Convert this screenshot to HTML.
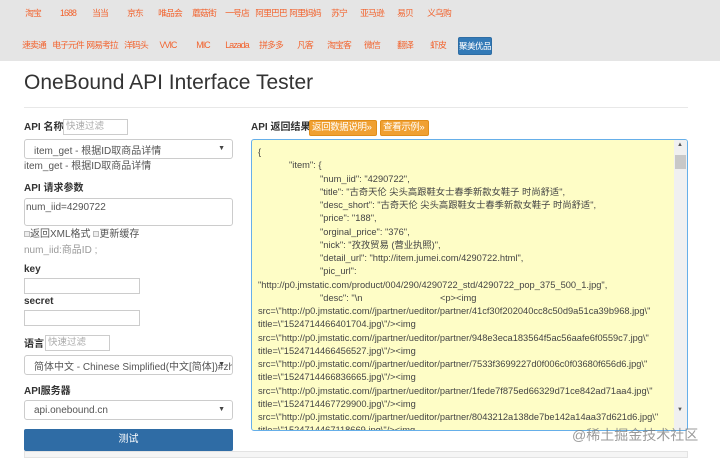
<!DOCTYPE html>
<html><head><meta charset="utf-8"><style>
*{margin:0;padding:0;box-sizing:border-box}
body{width:720px;height:458px;overflow:hidden;background:#fff;font-family:"Liberation Sans","Noto Sans CJK SC",sans-serif;position:relative;color:#333}
.nav{position:absolute;left:0;top:0;width:720px;height:61px;background:#e5e5e5}
.n{position:absolute;font-size:8.8px;line-height:12px;color:#f2642f;transform:translateX(-50%);white-space:nowrap;letter-spacing:-0.9px}
.btnj{position:absolute;left:458px;top:37px;width:34px;height:18px;background:#337ab7;color:#fff;font-size:8.5px;letter-spacing:-0.5px;line-height:16px;text-align:center;border-radius:2px;border:1px solid #2e6da4;white-space:nowrap}
.a{position:absolute;white-space:nowrap;line-height:12px}
.lbl{font-size:10px;font-weight:bold;color:#333}
.inp{position:absolute;border:1px solid #ccc;background:#fff;font-size:9.5px;color:#aaa;padding-left:2px;line-height:14px;white-space:nowrap;overflow:hidden}
.sel{position:absolute;border:1px solid #ccc;border-radius:3px;background:#fff;font-size:10px;color:#555;padding-left:9px;white-space:nowrap;overflow:hidden;display:flex;align-items:center}
.sel:after{content:"▼";position:absolute;right:7px;top:5px;font-size:7px;line-height:8px;color:#444}
.ta{position:absolute;left:251px;top:139px;width:437px;height:292px;background:#fefdc6;border:1px solid #66afe9;border-radius:3px;overflow:hidden}
.ta pre{font-family:"Liberation Sans","Noto Sans CJK SC",sans-serif;font-size:9.3px;line-height:13.25px;color:#444;padding:6px 0 0 6px;white-space:pre}
.sb{position:absolute;right:0;top:0;width:13px;height:100%;background:#f0f0f0}
.ob{position:absolute;top:120px;height:16px;background:#f0a032;color:#fff;font-size:9.5px;line-height:14px;padding:0 2px;border:1px solid #e08e1b;border-radius:2px;white-space:nowrap;letter-spacing:-0.4px;overflow:hidden}
</style></head><body>
<div class="nav">
<span class="n" style="left:33px;top:7px">淘宝</span>
<span class="n" style="left:68px;top:7px">1688</span>
<span class="n" style="left:100px;top:7px">当当</span>
<span class="n" style="left:135px;top:7px">京东</span>
<span class="n" style="left:170px;top:7px">唯品会</span>
<span class="n" style="left:204px;top:7px">蘑菇街</span>
<span class="n" style="left:237px;top:7px">一号店</span>
<span class="n" style="left:271px;top:7px">阿里巴巴</span>
<span class="n" style="left:305px;top:7px">阿里妈妈</span>
<span class="n" style="left:339px;top:7px">苏宁</span>
<span class="n" style="left:372px;top:7px">亚马逊</span>
<span class="n" style="left:405px;top:7px">易贝</span>
<span class="n" style="left:439px;top:7px">义乌购</span>
<span class="n" style="left:34px;top:39px">速卖通</span>
<span class="n" style="left:68px;top:39px">电子元件</span>
<span class="n" style="left:102px;top:39px">网易考拉</span>
<span class="n" style="left:136px;top:39px">洋码头</span>
<span class="n" style="left:168px;top:39px">VVIC</span>
<span class="n" style="left:203px;top:39px">MIC</span>
<span class="n" style="left:237px;top:39px">Lazada</span>
<span class="n" style="left:271px;top:39px">拼多多</span>
<span class="n" style="left:305px;top:39px">凡客</span>
<span class="n" style="left:339px;top:39px">淘宝客</span>
<span class="n" style="left:372px;top:39px">微信</span>
<span class="n" style="left:405px;top:39px">翻译</span>
<span class="n" style="left:438px;top:39px">虾皮</span>
<div class="btnj">聚美优品</div>
</div>
<div class="a" style="left:24px;top:70px;font-size:21px;line-height:26px;color:#333">OneBound API Interface Tester</div>
<div style="position:absolute;left:24px;top:107px;width:664px;height:1px;background:#e8e8e8"></div>

<div class="a lbl" style="left:24px;top:122px">API 名称</div>
<div class="inp" style="left:63px;top:119px;width:65px;height:16px">快速过滤</div>
<div class="sel" style="left:24px;top:139px;width:209px;height:20px">item_get - 根据ID取商品详情</div>
<div class="a" style="left:24px;top:161px;font-size:10px;color:#555">item_get - 根据ID取商品详情</div>
<div class="a lbl" style="left:24px;top:183px">API 请求参数</div>
<div style="position:absolute;left:24px;top:198px;width:209px;height:28px;border:1px solid #ccc;border-radius:3px;font-size:10px;line-height:12px;color:#555;padding:3px 1px">num_iid=4290722</div>
<div class="a" style="left:24px;top:229px;font-size:10px;color:#555"><span style="display:inline-block;width:6px;height:6px;border:1px solid #bbb;background:#eee"></span>返回XML格式 <span style="display:inline-block;width:6px;height:6px;border:1px solid #bbb;background:#eee"></span>更新缓存</div>
<div class="a" style="left:24px;top:245px;font-size:10px;color:#999">num_iid:商品ID ;</div>
<div class="a lbl" style="left:24px;top:264px">key</div>
<div class="inp" style="left:24px;top:278px;width:116px;height:16px"></div>
<div class="a lbl" style="left:24px;top:296px">secret</div>
<div class="inp" style="left:24px;top:310px;width:116px;height:16px"></div>
<div class="a lbl" style="left:24px;top:339px">语言</div>
<div class="inp" style="left:45px;top:335px;width:65px;height:16px">快速过滤</div>
<div class="sel" style="left:24px;top:355px;width:209px;height:20px;padding-right:20px">简体中文 - Chinese Simplified(中文[简体])#zh</div>
<div class="a lbl" style="left:24px;top:386px">API服务器</div>
<div class="sel" style="left:24px;top:400px;width:209px;height:20px">api.onebound.cn</div>
<div style="position:absolute;left:24px;top:429px;width:209px;height:22px;background:#2f6ca5;border-radius:2px;color:#fff;font-size:10px;text-align:center;line-height:22px">测试</div>
<div style="position:absolute;left:24px;top:451px;width:664px;height:7px;background:#f5f5f5;border:1px solid #e3e3e3"></div>

<div class="a lbl" style="left:251px;top:122px">API 返回结果</div>
<div class="ob" style="left:309px;width:68px">返回数据说明»</div>
<div class="ob" style="left:380px;width:49px">查看示例»</div>
<div class="ta"><pre>{
            "item": {
                        "num_iid": "4290722",
                        "title": "古奇天伦 尖头高跟鞋女士春季新款女鞋子 时尚舒适",
                        "desc_short": "古奇天伦 尖头高跟鞋女士春季新款女鞋子 时尚舒适",
                        "price": "188",
                        "orginal_price": "376",
                        "nick": "孜孜贸易 (营业执照)",
                        "detail_url": "http://item.jumei.com/4290722.html",
                        "pic_url":
"http://p0.jmstatic.com/product/004/290/4290722_std/4290722_pop_375_500_1.jpg",
                        "desc": "\n                              &lt;p&gt;&lt;img
src=\"http://p0.jmstatic.com//jpartner/ueditor/partner/41cf30f202040cc8c50d9a51ca39b968.jpg\"
title=\"1524714466401704.jpg\"/&gt;&lt;img
src=\"http://p0.jmstatic.com//jpartner/ueditor/partner/948e3eca183564f5ac56aafe6f0559c7.jpg\"
title=\"1524714466456527.jpg\"/&gt;&lt;img
src=\"http://p0.jmstatic.com//jpartner/ueditor/partner/7533f3699227d0f006c0f03680f656d6.jpg\"
title=\"1524714466836665.jpg\"/&gt;&lt;img
src=\"http://p0.jmstatic.com//jpartner/ueditor/partner/1fede7f875ed66329d71ce842ad71aa4.jpg\"
title=\"1524714467729900.jpg\"/&gt;&lt;img
src=\"http://p0.jmstatic.com//jpartner/ueditor/partner/8043212a138de7be142a14aa37d621d6.jpg\"
title=\"1524714467118669.jpg\"/&gt;&lt;img</pre>
<div class="sb"><div style="position:absolute;top:2px;left:3px;font-size:6px;color:#555">▲</div><div style="position:absolute;top:15px;left:1px;width:11px;height:14px;background:#c8c8c8"></div><div style="position:absolute;top:267px;left:3px;font-size:6px;color:#555">▼</div></div>
</div>
<div class="a" style="left:572px;top:426px;font-size:14px;line-height:18px;color:rgba(120,120,120,0.75)">@稀土掘金技术社区</div>
</body></html>
